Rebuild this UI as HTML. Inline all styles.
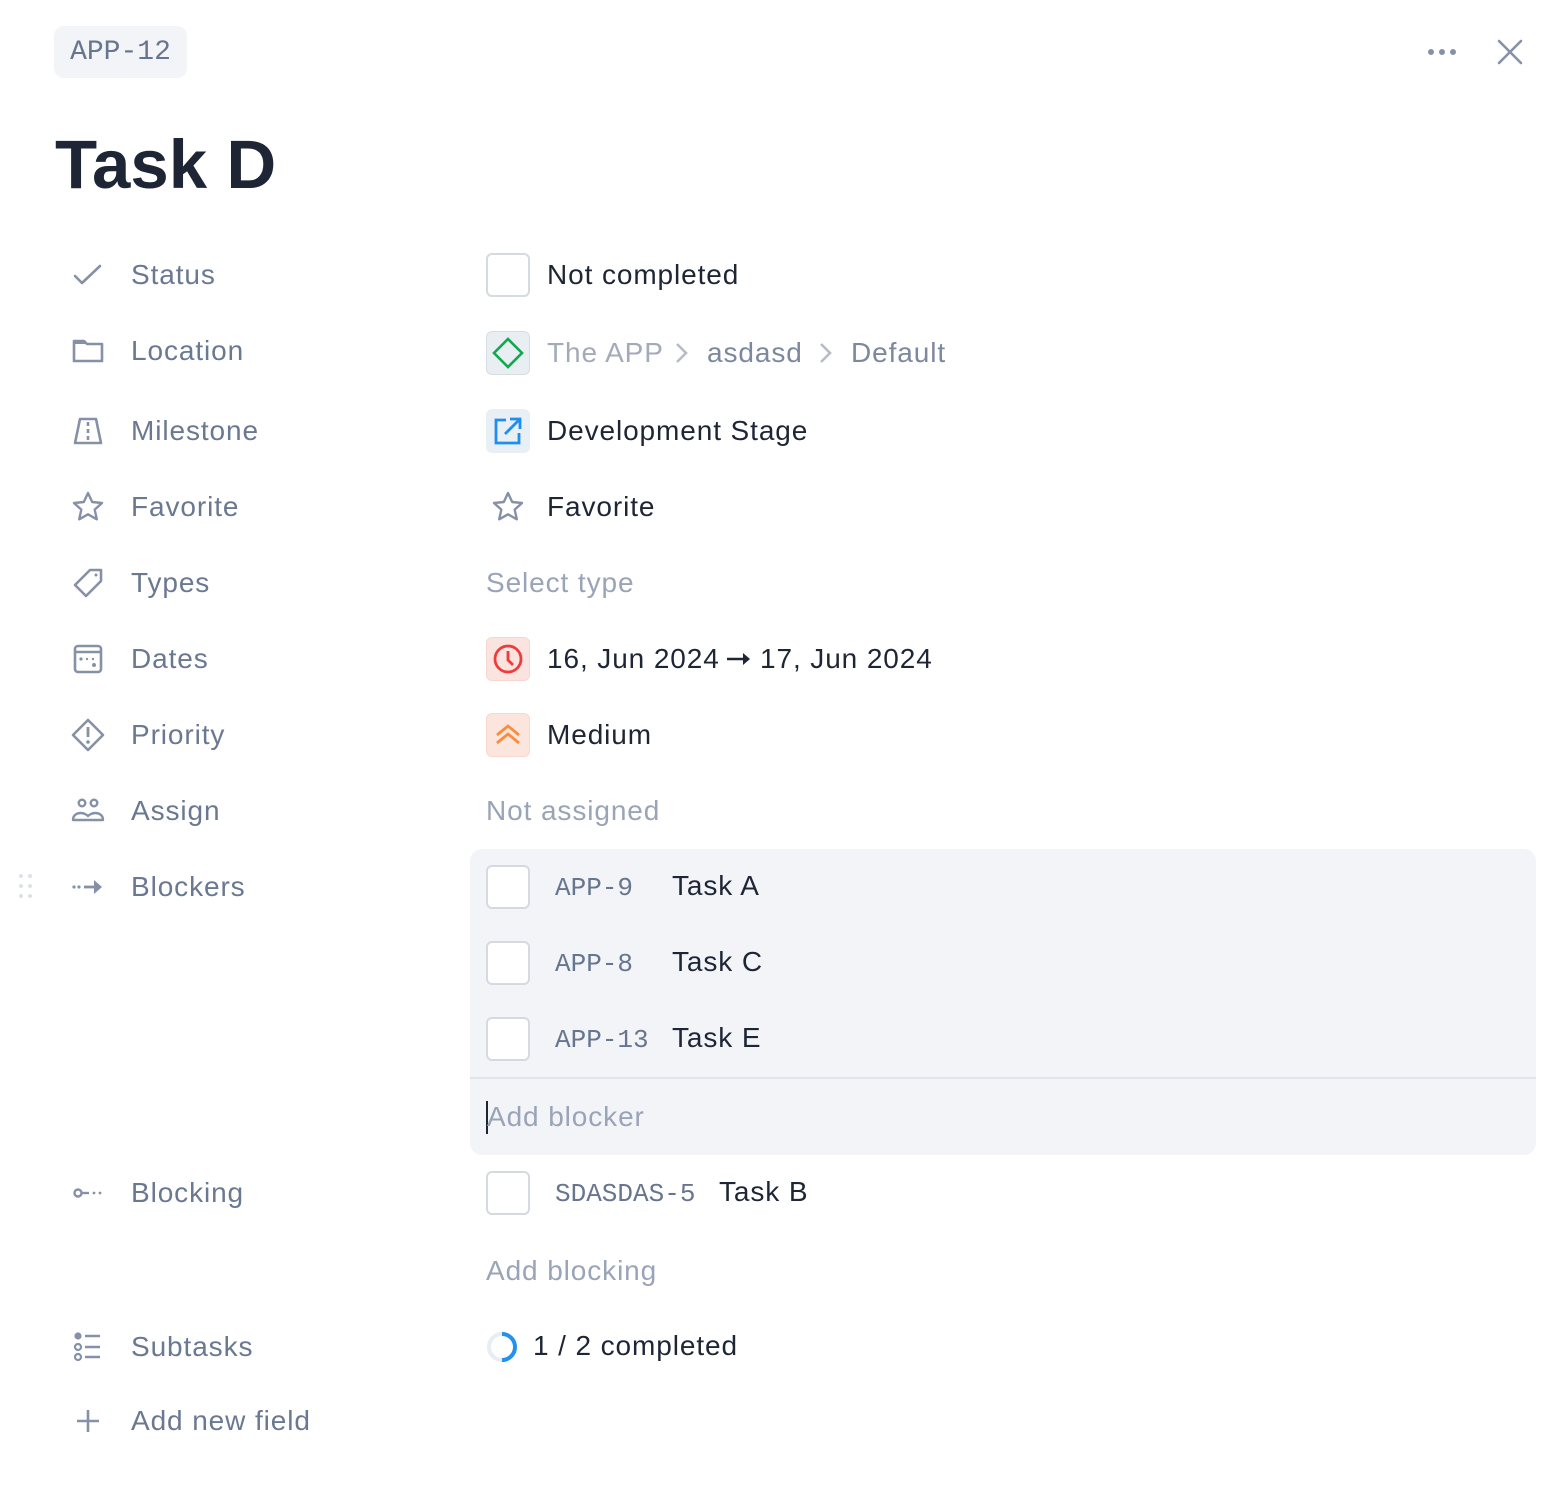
<!DOCTYPE html>
<html><head><meta charset="utf-8"><style>
*{margin:0;padding:0;box-sizing:border-box}
body{width:1568px;height:1490px;background:#fff;font-family:"Liberation Sans",sans-serif;position:relative;overflow:hidden}
.a{position:absolute}
.lbl{position:absolute;left:131px;height:40px;line-height:40px;font-size:28px;color:#6a7891;letter-spacing:0.9px}
.ic{position:absolute;left:70px;width:36px;height:36px}
.val{position:absolute;height:40px;line-height:40px;font-size:28px;color:#1e2636;letter-spacing:0.9px}
.ph{color:#9aa4b7}
.box{position:absolute;left:486px;width:44px;height:44px;border-radius:6px}
.cb{position:absolute;left:486px;width:44px;height:44px;border:2px solid #d5dae1;border-radius:6px;background:#fff}
.mono{font-family:"Liberation Mono",monospace;color:#67758e;font-size:26px;letter-spacing:0}
svg{display:block}
</style></head><body>
<div class="a" style="left:54px;top:26px;width:133px;height:52px;background:#f2f4f8;border-radius:10px;font-family:'Liberation Mono',monospace;font-size:28px;color:#67758e;line-height:54px;text-align:center">APP-12</div>
<svg class="a" style="left:1425px;top:40px" width="34" height="24"><circle cx="6" cy="12" r="3" fill="#8691a8"/><circle cx="17" cy="12" r="3" fill="#8691a8"/><circle cx="28" cy="12" r="3" fill="#8691a8"/></svg>
<svg class="a" style="left:1494px;top:36px" width="32" height="32"><path d="M5 5L27 27M27 5L5 27" stroke="#8691a8" stroke-width="2.6" stroke-linecap="round"/></svg>
<div class="a" style="left:55px;top:120px;font-size:69px;font-weight:bold;color:#1e2636;line-height:90px">Task D</div>

<svg class="ic" style="top:257px" viewBox="0 0 36 36"><path d="M5 19l7 7L30 9" fill="none" stroke="#8691a8" stroke-width="2.6" stroke-linecap="round" stroke-linejoin="round"/></svg>
<div class="lbl" style="top:255px">Status</div>
<svg class="ic" style="top:333px" viewBox="0 0 36 36"><path d="M4 8h10l3 3h15v17H4z" fill="none" stroke="#8691a8" stroke-width="2.6" stroke-linejoin="round"/><path d="M4 8h10l3 3H4z" fill="#8691a8"/></svg>
<div class="lbl" style="top:331px">Location</div>
<svg class="ic" style="top:413px" viewBox="0 0 36 36"><path d="M10 6h16l5 24H5z" fill="none" stroke="#8691a8" stroke-width="2.6" stroke-linejoin="round"/><path d="M18 9v4M18 16v4M18 23v4" stroke="#8691a8" stroke-width="2.6"/></svg>
<div class="lbl" style="top:411px">Milestone</div>
<svg class="ic" style="top:489px" viewBox="0 0 36 36"><path d="M18 4l4.2 9 9.8 1-7.3 6.6 2.1 9.7L18 25.3 9.2 30.3l2.1-9.7L4 14l9.8-1z" fill="none" stroke="#8691a8" stroke-width="2.4" stroke-linejoin="round"/></svg>
<div class="lbl" style="top:487px">Favorite</div>
<svg class="ic" style="top:565px" viewBox="0 0 36 36"><path d="M20 5h11v11L16 31 5 20z" fill="none" stroke="#8691a8" stroke-width="2.6" stroke-linejoin="round"/><circle cx="26" cy="10" r="1.5" fill="#8691a8"/></svg>
<div class="lbl" style="top:563px">Types</div>
<svg class="ic" style="top:641px" viewBox="0 0 36 36"><rect x="5" y="5" width="26" height="26" rx="3" fill="none" stroke="#8691a8" stroke-width="2.6"/><path d="M5 11h26" stroke="#8691a8" stroke-width="2.6"/><circle cx="11" cy="18" r="1.6" fill="#8691a8"/><circle cx="17" cy="18" r="1.2" fill="#8691a8"/><circle cx="23" cy="18" r="1.2" fill="#8691a8"/><circle cx="24" cy="24" r="2" fill="#8691a8"/></svg>
<div class="lbl" style="top:639px">Dates</div>
<svg class="ic" style="top:717px" viewBox="0 0 36 36"><path d="M18 3l15 15-15 15L3 18z" fill="none" stroke="#8691a8" stroke-width="2.6" stroke-linejoin="round"/><path d="M18 10v10" stroke="#8691a8" stroke-width="2.8"/><circle cx="18" cy="25" r="1.8" fill="#8691a8"/></svg>
<div class="lbl" style="top:715px">Priority</div>
<svg class="ic" style="top:793px" viewBox="0 0 36 36"><circle cx="12" cy="10" r="3.3" fill="none" stroke="#8691a8" stroke-width="2.4"/><circle cx="24" cy="10" r="3.3" fill="none" stroke="#8691a8" stroke-width="2.4"/><path d="M3 27c0-5 4-7 8-7s7 3 7 3 3-3 7-3 8 2 8 7z" fill="none" stroke="#8691a8" stroke-width="2.4" stroke-linejoin="round"/></svg>
<div class="lbl" style="top:791px">Assign</div>
<svg class="a" style="left:18px;top:873px" width="16" height="26"><g fill="#dde2e8"><circle cx="3" cy="3" r="2"/><circle cx="12" cy="3" r="2"/><circle cx="3" cy="13" r="2"/><circle cx="12" cy="13" r="2"/><circle cx="3" cy="23" r="2"/><circle cx="12" cy="23" r="2"/></g></svg>
<svg class="ic" style="top:869px" viewBox="0 0 36 36"><circle cx="4" cy="18" r="1.6" fill="#8691a8"/><circle cx="9" cy="18" r="1.6" fill="#8691a8"/><path d="M14 18h16" stroke="#8691a8" stroke-width="2.8"/><path d="M24 11l8 7-8 7z" fill="#8691a8"/></svg>
<div class="lbl" style="top:867px">Blockers</div>
<svg class="ic" style="top:1175px" viewBox="0 0 36 36"><circle cx="8" cy="18" r="3.5" fill="none" stroke="#8691a8" stroke-width="2.4"/><path d="M12 18h7" stroke="#8691a8" stroke-width="2.4"/><circle cx="24" cy="18" r="1.4" fill="#8691a8"/><circle cx="30" cy="18" r="1.4" fill="#8691a8"/></svg>
<div class="lbl" style="top:1173px">Blocking</div>
<svg class="ic" style="top:1329px" viewBox="0 0 36 36"><circle cx="8" cy="7" r="3.6" fill="#8691a8"/><circle cx="8" cy="18" r="3" fill="none" stroke="#8691a8" stroke-width="2.2"/><circle cx="8" cy="28" r="3" fill="none" stroke="#8691a8" stroke-width="2.2"/><path d="M15 7h15M15 18h15M15 28h15" stroke="#8691a8" stroke-width="2.6"/></svg>
<div class="lbl" style="top:1327px">Subtasks</div>
<svg class="ic" style="top:1403px" viewBox="0 0 36 36"><path d="M18 7v22M7 18h22" stroke="#8691a8" stroke-width="2.6"/></svg>
<div class="lbl" style="top:1401px">Add new field</div>

<div class="cb" style="top:253px"></div>
<div class="val" style="left:547px;top:255px">Not completed</div>

<div class="box" style="top:331px;background:#e8eef2;border:1px solid #d7dde3"><svg width="42" height="42" viewBox="0 0 42 42"><path d="M21 7l14 14-14 14L7 21z" fill="none" stroke="#12a84d" stroke-width="2.6"/></svg></div>
<div class="val" style="left:547px;top:333px;color:#a3abba">The APP</div>
<svg class="a" style="left:672px;top:340px" width="20" height="26"><path d="M5 4l9 9-9 9" fill="none" stroke="#b6bcc8" stroke-width="2.6"/></svg>
<div class="val" style="left:707px;top:333px;color:#7c87a0">asdasd</div>
<svg class="a" style="left:816px;top:340px" width="20" height="26"><path d="M5 4l9 9-9 9" fill="none" stroke="#b6bcc8" stroke-width="2.6"/></svg>
<div class="val" style="left:851px;top:333px;color:#7c87a0">Default</div>

<div class="box" style="top:409px;background:#e9f0f5"><svg width="44" height="44" viewBox="0 0 44 44"><path d="M20 11H10v23h23V24" fill="none" stroke="#1f8ef1" stroke-width="2.8"/><path d="M19 25l14-14M24 10h10v10" fill="none" stroke="#1f8ef1" stroke-width="2.8"/></svg></div>
<div class="val" style="left:547px;top:411px">Development Stage</div>

<svg class="a" style="left:488px;top:489px" width="40" height="36" viewBox="0 0 36 36"><path d="M18 4l4.2 9 9.8 1-7.3 6.6 2.1 9.7L18 25.3 9.2 30.3l2.1-9.7L4 14l9.8-1z" fill="none" stroke="#8691a8" stroke-width="2.4" stroke-linejoin="round"/></svg>
<div class="val" style="left:547px;top:487px">Favorite</div>

<div class="val ph" style="left:486px;top:563px">Select type</div>

<div class="box" style="top:637px;background:#fbe4df;border:1px solid #f6d6cf"><svg width="42" height="42" viewBox="0 0 42 42"><circle cx="21" cy="21" r="13" fill="none" stroke="#ee3b3b" stroke-width="2.8"/><path d="M21 13v9l5 5" fill="none" stroke="#ee3b3b" stroke-width="2.8"/></svg></div>
<div class="val" style="left:547px;top:639px">16, Jun 2024</div>
<svg class="a" style="left:725px;top:648px" width="28" height="22"><path d="M2 11h21" stroke="#1e2636" stroke-width="2.6"/><path d="M18 5l7 6-7 6z" fill="#1e2636"/></svg>
<div class="val" style="left:760px;top:639px">17, Jun 2024</div>

<div class="box" style="top:713px;background:#fce5dc;border:1px solid #f7d8cc"><svg width="42" height="42" viewBox="0 0 42 42"><path d="M10 21l11-9 11 9M10 29l11-9 11 9" fill="none" stroke="#fb8c3c" stroke-width="2.8"/></svg></div>
<div class="val" style="left:547px;top:715px">Medium</div>

<div class="val ph" style="left:486px;top:791px">Not assigned</div>

<div class="a" style="left:470px;top:849px;width:1066px;height:306px;background:#f2f4f8;border-radius:12px"></div>
<div class="a" style="left:470px;top:1077px;width:1066px;height:2px;background:#e1e4ea"></div>
<div class="cb" style="top:865px"></div>
<div class="val mono" style="left:555px;top:868px">APP-9</div>
<div class="val" style="left:672px;top:866px">Task A</div>
<div class="cb" style="top:941px"></div>
<div class="val mono" style="left:555px;top:944px">APP-8</div>
<div class="val" style="left:672px;top:942px">Task C</div>
<div class="cb" style="top:1017px"></div>
<div class="val mono" style="left:555px;top:1020px">APP-13</div>
<div class="val" style="left:672px;top:1018px">Task E</div>
<div class="a" style="left:486px;top:1101px;width:2px;height:33px;background:#1e2636"></div>
<div class="val ph" style="left:487px;top:1097px">Add blocker</div>

<div class="cb" style="top:1171px"></div>
<div class="val mono" style="left:555px;top:1174px">SDASDAS-5</div>
<div class="val" style="left:719px;top:1172px">Task B</div>
<div class="val ph" style="left:486px;top:1251px">Add blocking</div>

<svg class="a" style="left:485px;top:1330px" width="34" height="34" viewBox="0 0 34 34"><circle cx="17" cy="17" r="13" fill="none" stroke="#e6edf3" stroke-width="4"/><path d="M17 4a13 13 0 0 1 0 26" fill="none" stroke="#2591ee" stroke-width="4"/></svg>
<div class="val" style="left:533px;top:1326px">1 / 2 completed</div>
</body></html>
